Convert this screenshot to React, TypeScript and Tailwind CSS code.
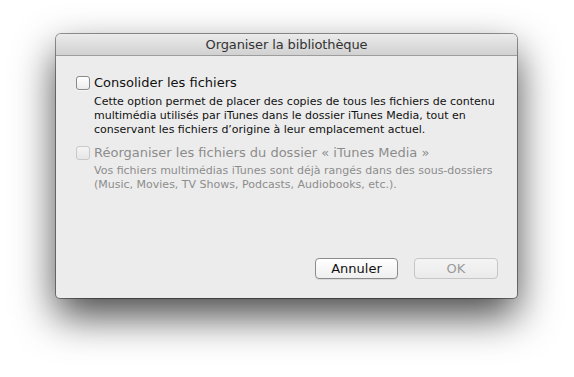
import React from "react";

function Checkbox({ disabled }: { disabled?: boolean }) {
  return (
    <div
      className={
        disabled
          ? "w-[14px] h-[14px] shrink-0 rounded-[3px] border border-[#c9c9c9] bg-gradient-to-b from-[#f4f4f4] to-[#e6e6e6]"
          : "w-[14px] h-[14px] shrink-0 rounded-[3px] border border-[#8a8a8a] bg-gradient-to-b from-[#ffffff] to-[#ececec] shadow-[0_1px_0_rgba(255,255,255,0.6)]"
      }
    />
  );
}

export default function App() {
  return (
    <div
      className="w-[574px] h-[377px] bg-white pt-[34px] pl-[56px] overflow-hidden"
      style={{ fontFamily: '"DejaVu Sans", "Noto Sans", sans-serif' }}
    >
      <div className="w-[461px] h-[264px] rounded-t-[5px] rounded-b-[4px] bg-[#ececec] shadow-[0_18px_40px_rgba(0,0,0,0.72),0_0_0_1px_rgba(0,0,0,0.4)] flex flex-col overflow-hidden">
        <div className="h-[22px] shrink-0 bg-gradient-to-b from-[#ebebeb] to-[#d1d1d1] border-b border-[#9d9d9d] flex items-center justify-center text-[13px] tracking-[-0.1px] text-[#333]">
          Organiser la bibliothèque
        </div>
        <div className="flex-1 flex flex-col pl-[20px] pr-[19px] pt-[20px] pb-[19px]">
          <div className="flex gap-[4px]">
            <Checkbox />
            <div className="flex flex-col">
              <div className="text-[13px] leading-[14px] text-[#111]">Consolider les fichiers</div>
              <div className="text-[11px] leading-[14px] text-[#111] mt-[5px]">
                Cette option permet de placer des copies de tous les fichiers de contenu multimédia utilisés par iTunes
                dans le dossier iTunes Media, tout en conservant les fichiers d’origine à leur emplacement actuel.
              </div>
            </div>
          </div>
          <div className="flex gap-[4px] mt-[9px]">
            <Checkbox disabled />
            <div className="flex flex-col">
              <div className="text-[13px] leading-[14px] text-[#8c8c8c]">
                Réorganiser les fichiers du dossier « iTunes Media »
              </div>
              <div className="text-[11px] leading-[14px] text-[#8c8c8c] mt-[4px]">
                Vos fichiers multimédias iTunes sont déjà rangés dans des sous-dossiers (Music, Movies, TV Shows,
                Podcasts, Audiobooks, etc.).
              </div>
            </div>
          </div>
          <div className="mt-auto flex justify-end gap-[16px]">
            <div className="w-[83px] h-[21px] rounded-[4px] border border-[#8c8c8c] bg-gradient-to-b from-[#ffffff] to-[#efefef] shadow-[0_1px_0_rgba(0,0,0,0.08)] flex items-center justify-center text-[13px] text-[#111]">
              Annuler
            </div>
            <div className="w-[84px] h-[21px] rounded-[4px] border border-[#c6c6c6] bg-gradient-to-b from-[#f4f4f4] to-[#ebebeb] flex items-center justify-center text-[13px] text-[#9a9a9a]">
              OK
            </div>
          </div>
        </div>
      </div>
    </div>
  );
}
